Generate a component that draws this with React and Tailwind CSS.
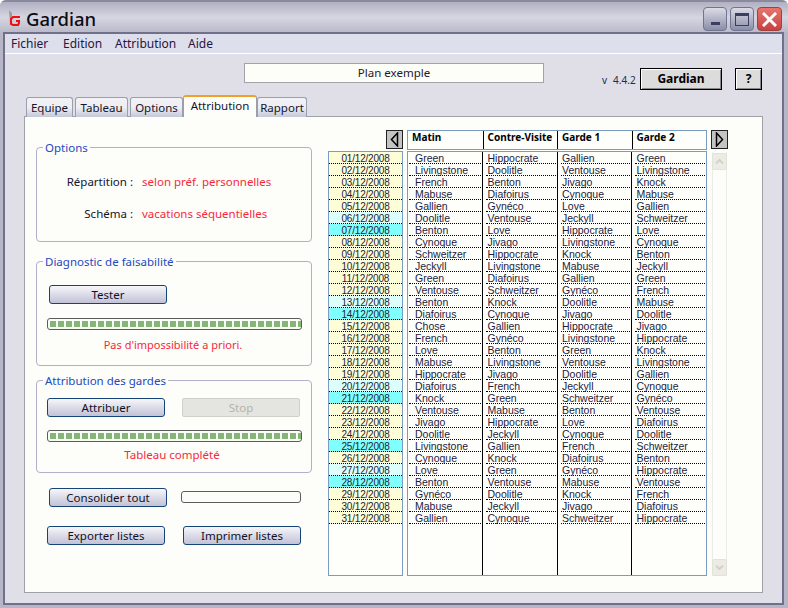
const rows = [
  ['01/12/2008', 'Green', 'Hippocrate', 'Gallien', 'Green'],
  ['02/12/2008', 'Livingstone', 'Doolitle', 'Ventouse', 'Livingstone'],
  ['03/12/2008', 'French', 'Benton', 'Jivago', 'Knock'],
  ['04/12/2008', 'Mabuse', 'Diafoirus', 'Cynoque', 'Mabuse'],
  ['05/12/2008', 'Gallien', 'Gynéco', 'Love', 'Gallien'],
  ['06/12/2008', 'Doolitle', 'Ventouse', 'Jeckyll', 'Schweitzer', 'light'],
  ['07/12/2008', 'Benton', 'Love', 'Hippocrate', 'Love', 'cyan'],
  ['08/12/2008', 'Cynoque', 'Jivago', 'Livingstone', 'Cynoque'],
  ['09/12/2008', 'Schweitzer', 'Hippocrate', 'Knock', 'Benton'],
  ['10/12/2008', 'Jeckyll', 'Livingstone', 'Mabuse', 'Jeckyll'],
  ['11/12/2008', 'Green', 'Diafoirus', 'Gallien', 'Green'],
  ['12/12/2008', 'Ventouse', 'Schweitzer', 'Gynéco', 'French'],
  ['13/12/2008', 'Benton', 'Knock', 'Doolitle', 'Mabuse', 'light'],
  ['14/12/2008', 'Diafoirus', 'Cynoque', 'Jivago', 'Doolitle', 'cyan'],
  ['15/12/2008', 'Chose', 'Gallien', 'Hippocrate', 'Jivago'],
  ['16/12/2008', 'French', 'Gynéco', 'Livingstone', 'Hippocrate'],
  ['17/12/2008', 'Love', 'Benton', 'Green', 'Knock'],
  ['18/12/2008', 'Mabuse', 'Livingstone', 'Ventouse', 'Livingstone'],
  ['19/12/2008', 'Hippocrate', 'Jivago', 'Doolitle', 'Gallien'],
  ['20/12/2008', 'Diafoirus', 'French', 'Jeckyll', 'Cynoque', 'light'],
  ['21/12/2008', 'Knock', 'Green', 'Schweitzer', 'Gynéco', 'cyan'],
  ['22/12/2008', 'Ventouse', 'Mabuse', 'Benton', 'Ventouse'],
  ['23/12/2008', 'Jivago', 'Hippocrate', 'Love', 'Diafoirus'],
  ['24/12/2008', 'Doolitle', 'Jeckyll', 'Cynoque', 'Doolitle'],
  ['25/12/2008', 'Livingstone', 'Gallien', 'French', 'Schweitzer', 'cyan'],
  ['26/12/2008', 'Cynoque', 'Knock', 'Diafoirus', 'Benton'],
  ['27/12/2008', 'Love', 'Green', 'Gynéco', 'Hippocrate', 'light'],
  ['28/12/2008', 'Benton', 'Ventouse', 'Mabuse', 'Ventouse', 'cyan'],
  ['29/12/2008', 'Gynéco', 'Doolitle', 'Knock', 'French'],
  ['30/12/2008', 'Mabuse', 'Jeckyll', 'Jivago', 'Diafoirus'],
  ['31/12/2008', 'Gallien', 'Cynoque', 'Schweitzer', 'Hippocrate'],
];

const dateBg = { light: 'bg-[#dcfffb]', cyan: 'bg-[#80ffff]' };

const Button = ({ className, children }) => (
  <button className={`absolute h-[19px] w-[118px] rounded-[3px] border border-[#174478] bg-gradient-to-b from-[#f6f6fa] to-[#c2c2d6] text-center text-[11.5px] leading-[16px] text-[#101028] ${className}`}>
    {children}
  </button>
);

const Progress = ({ className, full }) => (
  <div className={`absolute flex h-[12px] items-center gap-[2px] overflow-hidden rounded-[3px] border border-[#5c5c5c] bg-[#fcfcf8] px-[2px] ${className}`}>
    {full && Array.from({ length: 32 }).map((_, i) => (
      <span key={i} className="h-[6px] w-[6px] shrink-0 bg-[#84b774]" />
    ))}
  </div>
);

const Group = ({ title, className, children }) => (
  <div className={`absolute left-[36px] w-[276px] rounded-[4px] border border-[#b2afc8] ${className}`}>
    <span className="absolute left-[6px] top-[-8px] bg-[#fdfdf9] px-[2px] text-[11.5px] leading-[16px] text-[#2348c0]">{title}</span>
    {children}
  </div>
);

const Arrow = ({ left, flip }) => (
  <div className={`absolute top-[130px] flex h-[19px] w-[17px] items-center justify-center border border-[#222] bg-[#c4c4c4] ${left}`}>
    <svg width="9" height="15" viewBox="0 0 9 15" className={flip ? 'rotate-180' : ''}>
      <path d="M7.5 1 L1.5 7.5 L7.5 14 Z" fill="none" stroke="#000" strokeWidth="1.5" />
    </svg>
  </div>
);

const Tab = ({ label, className }) => (
  <div className={`absolute top-[97px] h-[20px] rounded-t-[3px] border border-b-0 border-[#9a9eae] bg-gradient-to-b from-[#f2f2f6] via-[#eeeef2] to-[#c4c8d8] text-center text-[11.5px] leading-[19px] text-[#14142c] ${className}`}>
    {label}
  </div>
);

const WinButton = ({ className, children }) => (
  <div className={`absolute top-[7px] flex h-[24px] items-center justify-center rounded-[4px] border border-[#6f7490] ${className}`}>
    {children}
  </div>
);

export default function App() {
  return (
    <div className="relative h-[608px] w-[788px] overflow-hidden rounded-t-[6px] bg-[#b6b6c8] font-[Noto_Sans,sans-serif] text-[11.5px] text-[#14142c]">
      {/* title bar */}
      <div className="absolute inset-x-0 top-0 h-[33px] border-t-2 border-[#8a8a9e] bg-gradient-to-b from-[#b0b0c2] via-[#d6d6e2] to-[#b8b8c8]" />
      <svg className="absolute left-[8px] top-[9px]" width="14" height="18" viewBox="0 0 14 18">
        <path d="M1 1 L4 4 L4 16 L2 16 Z" fill="#9c9c9c" />
        <path d="M12 8 L5 8 L3 10 L3 15 L5 16 L10 16 L11 14 L11 12 L8 12" fill="none" stroke="#f01010" strokeWidth="2" />
      </svg>
      <div className="absolute left-[26px] top-[6px] text-[18.5px] font-medium leading-[26px] text-[#0c0c14]">Gardian</div>
      <WinButton className="left-[703px] w-[24px] bg-gradient-to-b from-[#dcdce6] to-[#8c8ea8]">
        <span className="mt-[9px] h-[3px] w-[9px] bg-[#3a3e60]" />
      </WinButton>
      <WinButton className="left-[730px] w-[24px] bg-gradient-to-b from-[#dcdce6] to-[#8c8ea8]">
        <span className="h-[13px] w-[14px] border border-t-[3px] border-[#3a3e60]" />
      </WinButton>
      <WinButton className="left-[757px] w-[25px] border-[#a04040] bg-gradient-to-b from-[#e8746c] to-[#c84040]">
        <svg width="15" height="15" viewBox="0 0 15 15">
          <path d="M2 2 L13 13 M13 2 L2 13" stroke="#fff" strokeWidth="3" strokeLinecap="square" />
        </svg>
      </WinButton>

      {/* client area */}
      <div className="absolute bottom-[3px] left-[3px] right-[4px] top-[32px] border-2 border-[#70708a] bg-[#e0dfe8]">
        <div className="flex h-[20px] items-center border-b border-white bg-[#dde0ec] pl-[6px] text-[12px] text-[#2a1440]">
          <span className="w-[52px]">Fichier</span>
          <span className="w-[52px]">Edition</span>
          <span className="w-[73px]">Attribution</span>
          <span>Aide</span>
        </div>
      </div>

      <div className="absolute left-[244px] top-[63px] h-[20px] w-[300px] border border-[#a2a2aa] bg-[#fefef8] text-center leading-[18px] text-[#1a1a30]">Plan exemple</div>
      <div className="absolute left-[602px] top-[73px] flex gap-[6px] text-[10px] leading-[14px] text-[#1c2c54]"><span>v</span><span>4.4.2</span></div>
      <div className="absolute left-[640px] top-[68px] h-[22px] w-[82px] border border-black bg-[#dcdcdc] text-center text-[12px] font-bold leading-[20px] text-black shadow-[inset_1px_1px_0_#fff,inset_-1px_-1px_0_#888]">Gardian</div>
      <div className="absolute left-[735px] top-[68px] h-[22px] w-[27px] border border-black bg-[#dcdcdc] text-center text-[12px] font-bold leading-[20px] text-black shadow-[inset_1px_1px_0_#fff,inset_-1px_-1px_0_#888]">?</div>

      {/* tab panel */}
      <div className="absolute left-[24px] top-[116px] h-[477px] w-[739px] border border-[#9ea2a8] bg-[#fdfdf9]" />
      <Tab label="Equipe" className="left-[26px] w-[47px]" />
      <Tab label="Tableau" className="left-[75px] w-[53px]" />
      <Tab label="Options" className="left-[130px] w-[53px]" />
      <Tab label="Rapport" className="left-[257px] w-[50px]" />
      <div className="absolute left-[183px] top-[95px] h-[22px] w-[74px] rounded-t-[3px] border-x border-t-2 border-x-[#9a9eae] border-t-[#f0a028] bg-[#fdfdf9] text-center leading-[17px] text-[#14142c]">Attribution</div>

      {/* left side */}
      <Group title="Options" className="top-[147px] h-[95px]">
        <div className="absolute right-[178px] top-[26px] leading-[16px]">Répartition :</div>
        <div className="absolute left-[105px] top-[26px] leading-[16px] text-[#f8283c]">selon préf. personnelles</div>
        <div className="absolute right-[178px] top-[58px] leading-[16px]">Schéma :</div>
        <div className="absolute left-[105px] top-[58px] leading-[16px] text-[#f8283c]">vacations séquentielles</div>
      </Group>
      <Group title="Diagnostic de faisabilité" className="top-[261px] h-[105px]">
        <div className="absolute inset-x-0 top-[75px] pr-[2px] text-center text-[11px] leading-[16px] text-[#f8283c]">Pas d'impossibilité a priori.</div>
      </Group>
      <Button className="left-[49px] top-[285px]">Tester</Button>
      <Progress full className="left-[47px] top-[318px] w-[255px]" />
      <Group title="Attribution des gardes" className="top-[380px] h-[93px]">
        <div className="absolute inset-x-0 top-[66px] pr-[4px] text-center leading-[16px] text-[#f8283c]">Tableau complété</div>
      </Group>
      <Button className="left-[47px] top-[398px]">Attribuer</Button>
      <div className="absolute left-[182px] top-[398px] h-[19px] w-[118px] rounded-[2px] border border-[#d0d0c8] bg-[#e4e4e0] text-center leading-[17px] text-[#b4b4a8]">Stop</div>
      <Progress full className="left-[47px] top-[430px] w-[255px]" />
      <Button className="left-[49px] top-[488px]">Consolider tout</Button>
      <Progress className="left-[181px] top-[491px] w-[120px]" />
      <Button className="left-[47px] top-[526px]">Exporter listes</Button>
      <Button className="left-[183px] top-[526px]">Imprimer listes</Button>

      {/* table */}
      <Arrow left="left-[386px]" />
      <Arrow left="left-[711px]" flip />
      <div className="absolute left-[407px] top-[130px] flex h-[20px] w-[300px] border border-[#7a9cc0] bg-[#fefefa] text-[10px] font-bold leading-[12px] text-black">
        {['Matin', 'Contre-Visite', 'Garde 1', 'Garde 2'].map((h, i) => (
          <div key={h} className={`w-[75px] pl-[4px] ${i > 0 ? 'border-l border-black pl-[3px]' : ''}`}>{h}</div>
        ))}
      </div>
      <div className="absolute left-[328px] top-[151px] h-[425px] w-[75px] border border-[#7a9cc0] bg-[#fefefa] font-[Liberation_Sans,sans-serif]">
        {rows.map((r) => (
          <div key={r[0]} className={`h-[12px] border-b border-dotted border-black text-center text-[10px] leading-[13px] tracking-[-0.2px] text-[#1c1c34] ${dateBg[r[5]] || 'bg-[#fdfdd8]'}`}>{r[0]}</div>
        ))}
      </div>
      <div className="absolute left-[407px] top-[151px] flex h-[425px] w-[300px] border border-[#7a9cc0] bg-[#fefefa] font-[Liberation_Sans,sans-serif]">
        {[1, 2, 3, 4].map((c) => (
          <div key={c} className={`w-[75px] ${c > 1 ? 'border-l border-black pl-[3px]' : 'pl-[1px]'}`}>
            {rows.map((r) => (
              <div key={r[0]} className={`mr-[1px] h-[12px] border-b border-dotted border-black text-[10.5px] leading-[12px] text-[#1c1c3c] ${c === 1 ? 'pl-[6px]' : 'pl-[1px]'}`}>{r[c]}</div>
            ))}
          </div>
        ))}
      </div>

      {/* scrollbar, greyed out */}
      <div className="absolute left-[712px] top-[152px] h-[424px] w-[15px] border-x border-[#ecece6]">
        <div className="absolute inset-x-[-1px] top-[1px] flex h-[17px] items-center justify-center rounded-[2px] border border-[#e2e2da] bg-[#ecece4]">
          <svg width="9" height="7" viewBox="0 0 9 7"><path d="M1 5.5 L4.5 2 L8 5.5" fill="none" stroke="#d2d2ca" strokeWidth="2" /></svg>
        </div>
        <div className="absolute inset-x-[-1px] bottom-0 flex h-[17px] items-center justify-center rounded-[2px] border border-[#e2e2da] bg-[#ecece4]">
          <svg width="9" height="7" viewBox="0 0 9 7"><path d="M1 1.5 L4.5 5 L8 1.5" fill="none" stroke="#d2d2ca" strokeWidth="2" /></svg>
        </div>
      </div>
    </div>
  );
}
